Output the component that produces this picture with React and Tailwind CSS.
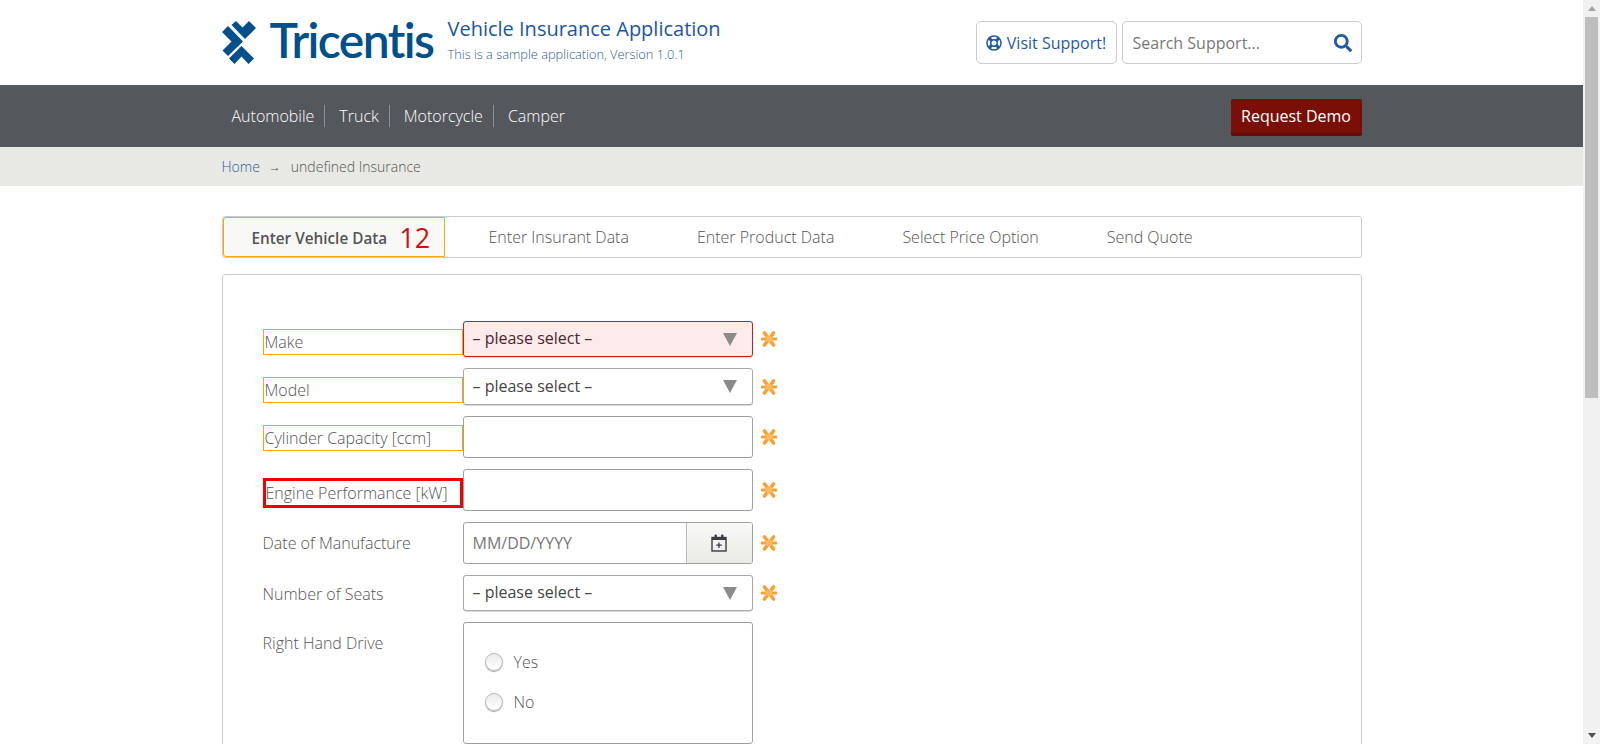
import React from "react";
import { FaSearch, FaRegLifeRing } from "react-icons/fa";

function Mark() {
  return (
    <svg width="36" height="44" viewBox="0 0 36 44" className="shrink-0 -ml-[1px]">
      <g fill="#00508c">
        <polygon points="10.5,4 15,0 21.5,6.5 28,0 35,7 24,18" />
        <polygon points="1,11 7,5 22,20.5 7,35 1.5,29.5 10.5,20.5" />
        <polygon points="20.5,25 33,37.5 27.5,43 20.5,35.5 13.5,43 8,37.5" />
      </g>
    </svg>
  );
}

function Star() {
  return (
    <svg width="16" height="16" viewBox="0 0 16 16" className="shrink-0">
      <g stroke="#f7a035" strokeLinecap="round">
        <line x1="1" y1="8" x2="15" y2="8" strokeWidth="3" />
        <line x1="3.5" y1="2" x2="12.5" y2="14" strokeWidth="3.6" />
        <line x1="12.5" y1="2" x2="3.5" y2="14" strokeWidth="3.6" />
      </g>
      <circle cx="8" cy="8" r="3.4" fill="#fbb860" />
    </svg>
  );
}

function Arrow() {
  return (
    <svg width="14" height="13" viewBox="0 0 14 13" className="shrink-0">
      <polygon points="0,0 14,0 7,13" fill="#8b8b8b" />
    </svg>
  );
}

function Select({ error, h = "h-[36px]" }) {
  return (
    <div className={`w-[290px] ${h} flex items-center justify-between pl-[9px] pr-[15px] rounded-[3px] border text-[16px] ${error ? "bg-[#fdeaea] border-[#c81e1e] text-[#4a2530]" : "bg-white border-[#a8a8a8] text-[#444]"} shadow-[0_1px_1px_rgba(0,0,0,0.15)]`}>
      <span className="-mt-[2px]">– please select –</span>
      <Arrow />
    </div>
  );
}

function Row({ label, labelClass, children, star = true, labelPt }) {
  return (
    <div className="flex items-start">
      <div className={`w-[200px] shrink-0 ${labelPt}`}>
        <div className={`text-[16px] font-light text-[#555] ${labelClass}`}>{label}</div>
      </div>
      {children}
      {star && <div className="ml-[8px] self-center"><Star /></div>}
    </div>
  );
}

function Radio({ label }) {
  return (
    <div className="flex items-center h-[18px]">
      <div className="w-[18px] h-[18px] rounded-full border border-[#b8b8b8] bg-gradient-to-b from-[#ececec] to-white shadow-[0_1px_1px_rgba(0,0,0,0.35)]" />
      <span className="ml-[11px] text-[16px] font-light text-[#555]">{label}</span>
    </div>
  );
}

const orange = "border border-[#f9a70d] h-[26px] leading-[24px] pl-[1px]";

export default function App() {
  return (
    <div className="flex h-[744px] w-[1600px] overflow-hidden bg-white font-['Open_Sans',sans-serif]">
      <main className="flex-1 min-w-0">
        <div className="h-[85px]">
          <div className="w-[1140px] mx-auto h-full flex items-center">
            <Mark />
            <span className="ml-[13px] font-['Lato',sans-serif] text-[48px] leading-none font-semibold tracking-[-1.6px] text-[#00508c] w-[166px] -mt-[5px]">Tricentis</span>
            <div className="ml-[12px] flex flex-col -mt-[4px]">
              <span className="text-[20px] leading-[26px] font-normal text-[#1a55a5] -mt-[3px]">Vehicle Insurance Application</span>
              <span className="text-[12.8px] leading-[18px] font-light text-[#2d5a9e] mt-[3px]">This is a sample application, Version 1.0.1</span>
            </div>
            <div className="ml-auto flex gap-[5px]">
              <div className="w-[141px] h-[43px] rounded-[5px] border border-[#ccc] flex items-center justify-center text-[16px] text-[#1f5aa8]">
                <FaRegLifeRing className="w-[16px] h-[16px] mr-[5px]" />
                <span>Visit Support!</span>
              </div>
              <div className="w-[240px] h-[43px] rounded-[5px] border border-[#ccc] flex items-center justify-between pl-[10px] pr-[9px] text-[16px] text-[#777]">
                <span>Search Support...</span>
                <FaSearch className="w-[18px] h-[18px] text-[#1f5aa8]" />
              </div>
            </div>
          </div>
        </div>

        <div className="h-[62px] bg-[#54575c]">
          <div className="w-[1140px] mx-auto h-full flex items-center justify-between">
            <div className="flex items-center pl-[10px] text-[16px] font-light text-white">
              <span className="pr-[10px] border-r border-[#8d8f93] leading-[22px]">Automobile</span>
              <span className="pl-[14px] pr-[10px] border-r border-[#8d8f93] leading-[22px]">Truck</span>
              <span className="pl-[14px] pr-[10px] border-r border-[#8d8f93] leading-[22px]">Motorcycle</span>
              <span className="pl-[14px] leading-[22px]">Camper</span>
            </div>
            <div className="w-[131px] h-[37px] mt-[2px] rounded-[2px] bg-[#7a0f07] border-b-[3px] border-[#650b05] flex items-center justify-center text-[16px] text-white">Request Demo</div>
          </div>
        </div>

        <div className="h-[39px] bg-[#e8e9e4]">
          <div className="w-[1140px] mx-auto h-full flex items-center text-[14px] font-light">
            <span className="text-[#2d5a9e]">Home</span>
            <span className="ml-[9px] text-[12px] font-normal text-[#555]">→</span>
            <span className="ml-[10px] text-[#555]">undefined Insurance</span>
          </div>
        </div>

        <div className="w-[1140px] mx-auto mt-[30px]">
          <div className="h-[42px] rounded-[3px] border border-[#ccc] flex items-center text-[16px] font-light text-[#555]">
            <div className="w-[222px] h-[40px] shrink-0 rounded-l-[3px] border border-[#f9a70d] bg-[#f8f8f6] flex items-center pl-[28px]">
              <span className="text-[15.3px] font-semibold text-[#555] mt-[2px]">Enter Vehicle Data</span>
              <span className="ml-[12px] text-[27px] font-normal leading-none text-[#c8140f]">12</span>
            </div>
            <span className="ml-[44px]">Enter Insurant Data</span>
            <span className="ml-[68px]">Enter Product Data</span>
            <span className="ml-[68px]">Select Price Option</span>
            <span className="ml-[68px]">Send Quote</span>
          </div>

          <div className="mt-[16px] h-[600px] rounded-[3px] border border-[#ccc] pl-[40px] pt-[46px] flex flex-col gap-[11px]">
            <Row label="Make" labelClass={orange} labelPt="pt-[8px]"><Select error /></Row>
            <Row label="Model" labelClass={orange} labelPt="pt-[9px]"><Select h="h-[37px]" /></Row>
            <Row label="Cylinder Capacity [ccm]" labelClass={orange} labelPt="pt-[9px]">
              <div className="w-[290px] h-[42px] rounded-[3px] border border-[#a0a0a0] bg-white" />
            </Row>
            <Row label="Engine Performance [kW]" labelClass="border-[3px] border-[#f00000] h-[30px] leading-[24px]" labelPt="pt-[9px]">
              <div className="w-[290px] h-[42px] rounded-[3px] border border-[#a0a0a0] bg-white" />
            </Row>
            <Row label="Date of Manufacture" labelClass="h-[42px] leading-[43px]">
              <div className="w-[290px] h-[42px] rounded-[3px] border border-[#a0a0a0] bg-white flex overflow-hidden">
                <span className="flex-1 pl-[9px] leading-[40px] text-[16px] text-[#777]">MM/DD/YYYY</span>
                <div className="w-[66px] border-l border-[#bbb] bg-gradient-to-b from-[#f9f9f7] to-[#e9e9e6] flex items-center justify-center">
                  <svg width="16" height="18" viewBox="0 0 16 18" fill="none">
                    <rect x="1" y="3.5" width="14" height="13.5" stroke="#3a3d42" strokeWidth="1.4" />
                    <rect x="1" y="3" width="14" height="3" fill="#3a3d42" />
                    <rect x="3.5" y="0.5" width="2.4" height="4.5" rx="1" fill="#3a3d42" />
                    <rect x="10.1" y="0.5" width="2.4" height="4.5" rx="1" fill="#3a3d42" />
                    <path d="M8 8.5v5.5M5.2 11.2h5.6" stroke="#3a3d42" strokeWidth="1.3" />
                  </svg>
                </div>
              </div>
            </Row>
            <Row label="Number of Seats" labelClass="h-[36px] leading-[38px]"><Select /></Row>
            <Row label="Right Hand Drive" labelClass="" labelPt="pt-[9px]" star={false}>
              <div className="w-[290px] h-[122px] rounded-[3px] border border-[#a0a0a0] bg-white pt-[30px] pl-[21px] flex flex-col gap-[22px]">
                <Radio label="Yes" />
                <Radio label="No" />
              </div>
            </Row>
          </div>
        </div>
      </main>

      <div className="w-[17px] h-full shrink-0 bg-[#f1f1f1] flex flex-col items-center">
        <div className="h-[17px] flex items-center justify-center shrink-0">
          <svg width="8" height="5" viewBox="0 0 8 5"><polygon points="4,0 8,5 0,5" fill="#a3a3a3" /></svg>
        </div>
        <div className="w-[13px] h-[381px] shrink-0 bg-[#bebebe]" />
        <div className="flex-1" />
        <div className="h-[17px] flex items-center justify-center shrink-0">
          <svg width="8" height="5" viewBox="0 0 8 5"><polygon points="0,0 8,0 4,5" fill="#505050" /></svg>
        </div>
      </div>
    </div>
  );
}
